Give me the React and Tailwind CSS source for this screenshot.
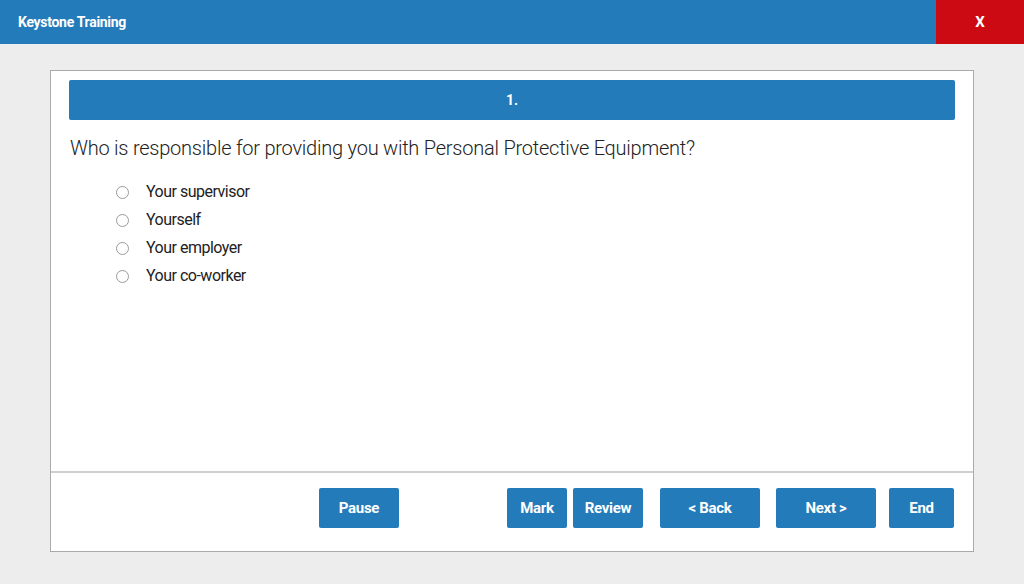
export default function App() {
  const options = ["Your supervisor", "Yourself", "Your employer", "Your co-worker"];
  const btn =
    "h-[40px] rounded-[2px] bg-[#247bba] text-white text-[15px] font-bold flex items-center justify-center tracking-[-0.3px]";
  return (
    <div
      className="w-[1024px] h-[584px] bg-[#ededed] flex flex-col overflow-hidden"
      style={{ fontFamily: "Roboto, 'Liberation Sans', sans-serif" }}
    >
      <div className="h-[44px] bg-[#247bba] flex items-center shrink-0">
        <div className="flex-1 pl-[18px] text-white text-[14px] font-bold tracking-[-0.3px]">
          Keystone Training
        </div>
        <div className="w-[88px] h-full bg-[#cc0a14] flex items-center justify-center text-white text-[15px] font-bold">
          X
        </div>
      </div>
      <div className="pt-[26px] pl-[50px]">
        <div className="w-[924px] h-[482px] bg-white border border-[#aaaaaa] flex flex-col">
          <div className="flex-1 px-[18px] pt-[9px]">
            <div className="h-[40px] rounded-[2px] bg-[#247bba] flex items-center justify-center text-white text-[14px] font-bold">
              1.
            </div>
            <div className="mt-[16px] pl-[1px] text-[20px] font-light text-[#222222] tracking-[-0.23px] leading-[24px]">
              Who is responsible for providing you with Personal Protective Equipment?
            </div>
            <div className="mt-[18px] pl-[47px] flex flex-col">
              {options.map((o) => (
                <div key={o} className="h-[28px] flex items-center">
                  <span className="w-[13px] h-[13px] rounded-full border border-[#9a9a9a] bg-white shrink-0" />
                  <span className="ml-[17px] text-[16px] text-[#222222] tracking-[-0.5px]">{o}</span>
                </div>
              ))}
            </div>
          </div>
          <div className="h-[2px] bg-[#cfcfcf]" />
          <div className="h-[78px] flex items-start pt-[15px] pl-[268px] pr-[18px]">
            <div className={`${btn} w-[80px]`}>Pause</div>
            <div className={`${btn} w-[60px] ml-[108px]`}>Mark</div>
            <div className={`${btn} w-[70px] ml-[6px]`}>Review</div>
            <div className={`${btn} w-[100px] ml-[17px]`}>&lt; Back</div>
            <div className={`${btn} w-[100px] ml-[16px]`}>Next &gt;</div>
            <div className={`${btn} w-[65px] ml-[13px]`}>End</div>
          </div>
        </div>
      </div>
    </div>
  );
}
